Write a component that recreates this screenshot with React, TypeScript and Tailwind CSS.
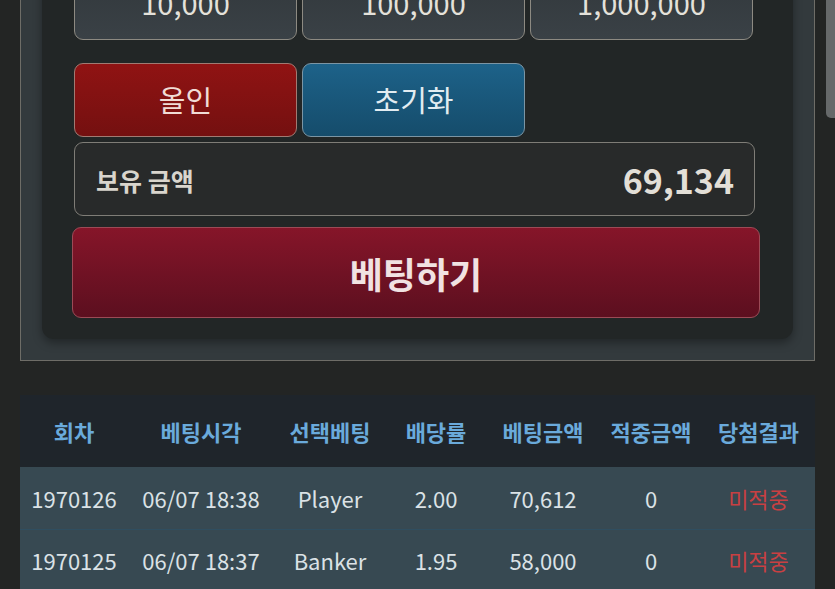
const font = { fontFamily: '"Noto Sans CJK KR", "Noto Sans", sans-serif' };

const amounts = ["10,000", "100,000", "1,000,000"];

const headers = ["회차", "베팅시각", "선택베팅", "배당률", "베팅금액", "적중금액", "당첨결과"];

const rows = [
  ["1970126", "06/07 18:38", "Player", "2.00", "70,612", "0", "미적중"],
  ["1970125", "06/07 18:37", "Banker", "1.95", "58,000", "0", "미적중"],
];

const cols = "grid grid-cols-[108px_146px_112px_100px_114px_102px_113px]";

function BetPanel() {
  return (
    <div className="mx-[20px] mt-[-81px] border border-[#6e6d67] bg-[#333a3d] p-[21px]">
      <div className="rounded-[12px] bg-[#222626] px-[32px] pt-[25px] pb-[21px] shadow-[0_4px_10px_rgba(0,0,0,0.35)]">
        <div className="flex gap-[5px]">
          {amounts.map((a) => (
            <button
              key={a}
              className="flex h-[74px] w-[223px] items-center justify-center rounded-[9px] border border-[#8d8a82] bg-gradient-to-b from-[#31373b] to-[#3a4146] text-[29px] text-[#e4e1da]"
            >
              {a}
            </button>
          ))}
        </div>
        <div className="mt-[23px] flex gap-[5px]">
          <button className="flex h-[74px] w-[223px] items-center justify-center rounded-[9px] border border-[#a17a72] bg-gradient-to-b from-[#901313] to-[#741010] text-[29px] text-[#f1dcd6]">
            올인
          </button>
          <button className="flex h-[74px] w-[223px] items-center justify-center rounded-[9px] border border-[#7b95a4] bg-gradient-to-b from-[#1d6289] to-[#154c6b] text-[29px] text-[#e2ecf1]">
            초기화
          </button>
        </div>
        <div className="mt-[5px] flex h-[74px] w-[681px] items-center justify-between rounded-[9px] border border-[#7f7d77] bg-[#282a2a] pl-[21px] pr-[20px]">
          <span className="mt-[4px] text-[25px] font-bold text-[#d9d5cd]">보유 금액</span>
          <span className="text-[34px] font-bold text-[#e3dfd7]">69,134</span>
        </div>
        <button className="mt-[11px] ml-[-2px] flex h-[91px] w-[688px] items-center justify-center rounded-[9px] border border-[#9c4a56] bg-gradient-to-b from-[#861529] to-[#5c0f1f] text-[36px] font-bold text-[#f1e2e2]">
          베팅하기
        </button>
      </div>
    </div>
  );
}

function History() {
  return (
    <div className="mx-[20px] mt-[34px] w-[795px]">
      <div className={`${cols} h-[72px] items-center bg-[#1f252b] text-[22px] font-bold text-[#6aaadb]`}>
        {headers.map((h) => (
          <div key={h} className="text-center">
            {h}
          </div>
        ))}
      </div>
      {rows.map((r, i) => (
        <div
          key={r[0]}
          className={`${cols} h-[62px] items-center bg-[#374952] text-[22px] text-[#dbe2e6] ${i > 0 ? "border-t border-[#2f4e60]" : ""}`}
        >
          {r.map((c, j) => (
            <div key={j} className={`text-center ${j === 6 ? "text-[#c84042]" : ""}`}>
              {c}
            </div>
          ))}
        </div>
      ))}
    </div>
  );
}

export default function App() {
  return (
    <div className="relative h-[589px] w-[835px] overflow-hidden bg-[#232524]" style={font}>
      <BetPanel />
      <History />
      <div className="absolute right-0 top-[-10px] h-[128px] w-[9px] rounded-l-[5px] bg-[#66696a]" />
    </div>
  );
}
